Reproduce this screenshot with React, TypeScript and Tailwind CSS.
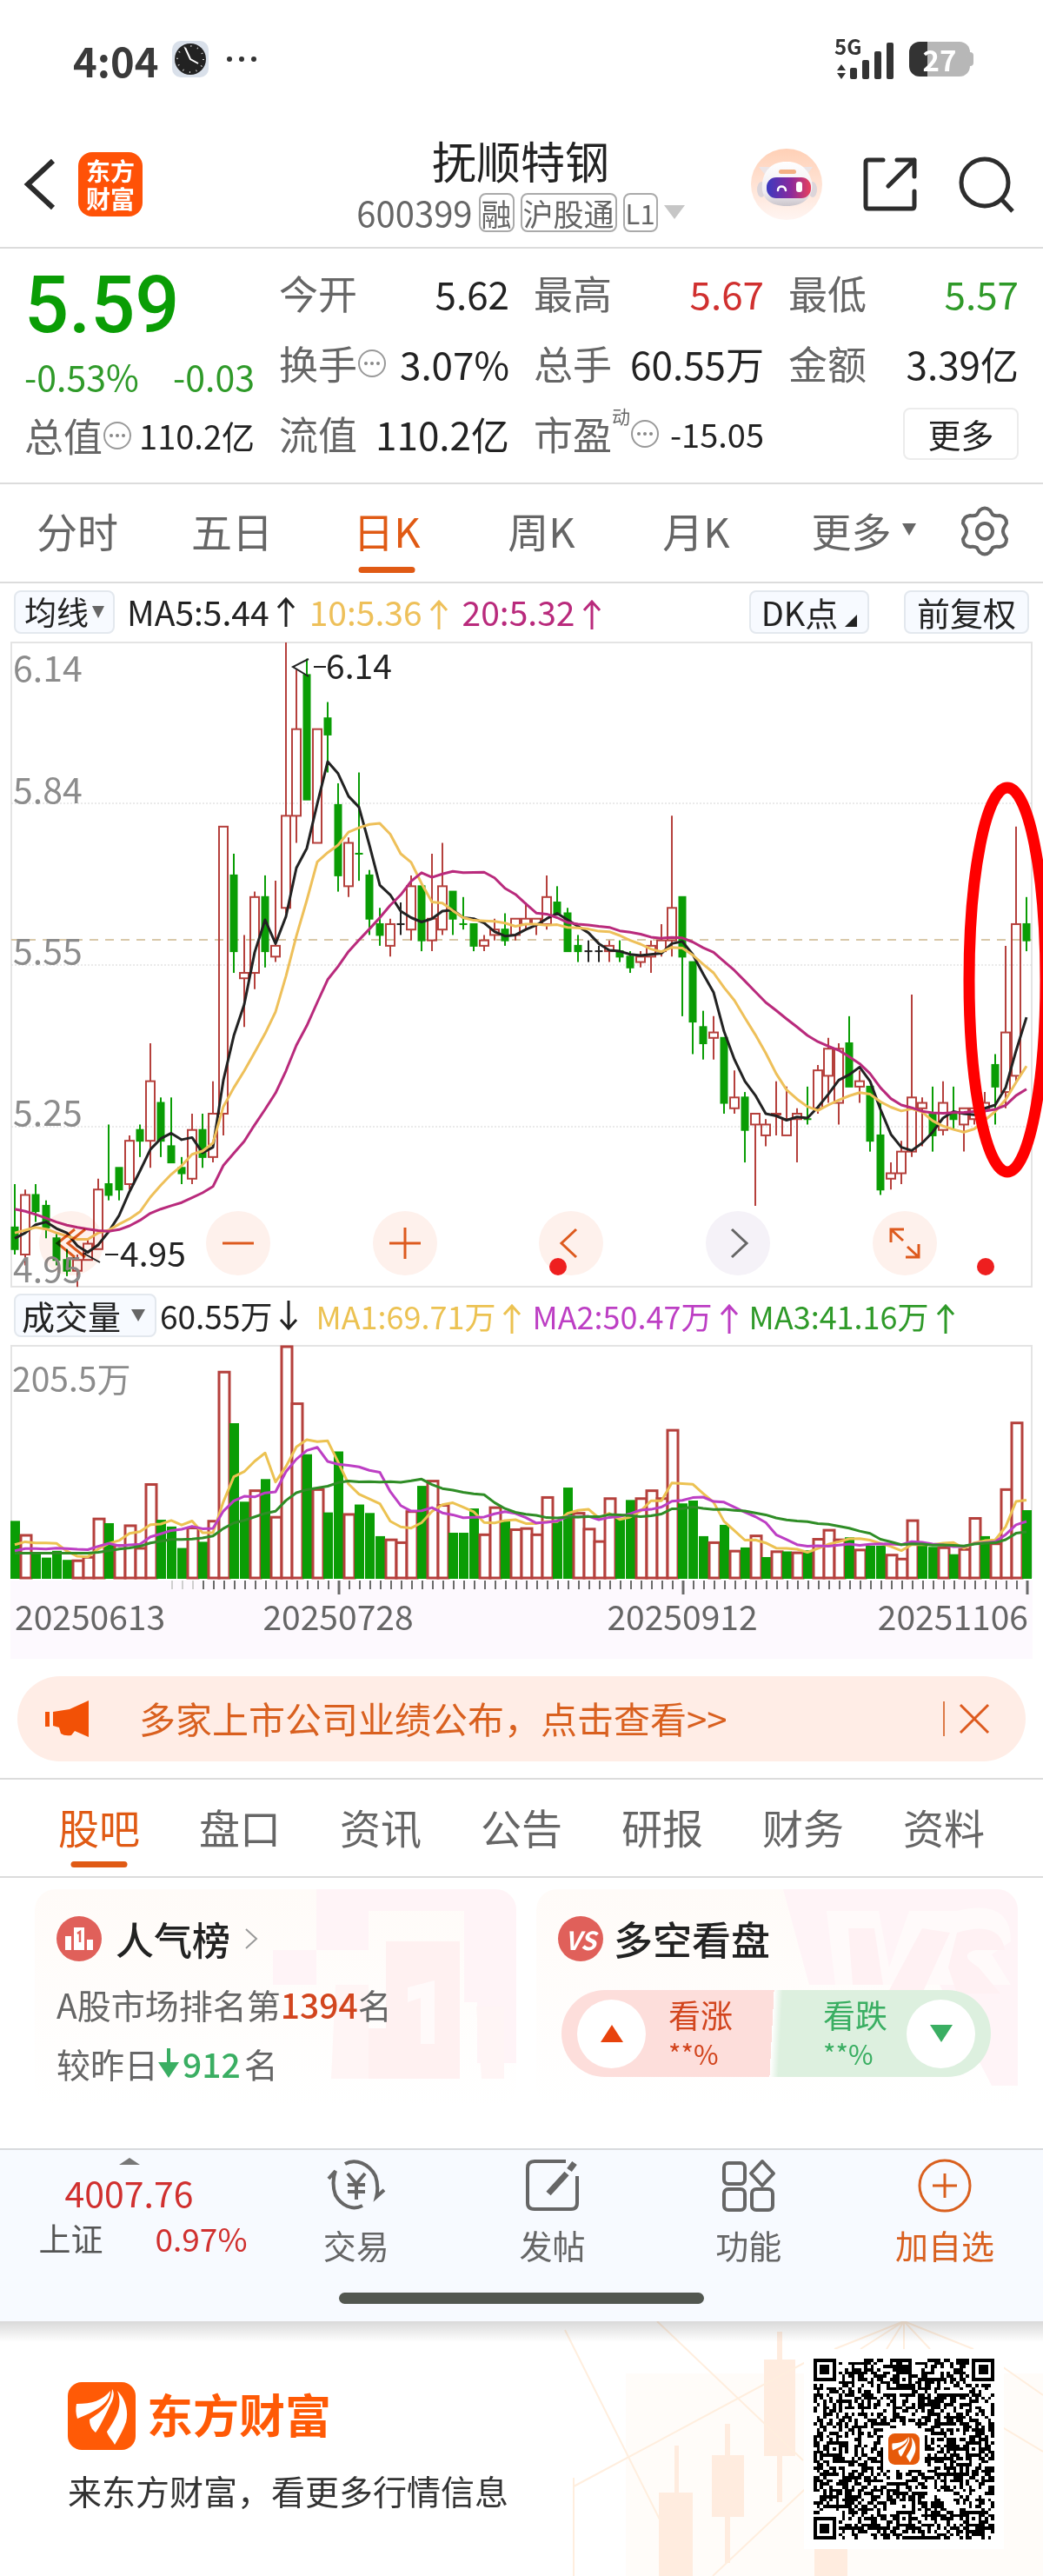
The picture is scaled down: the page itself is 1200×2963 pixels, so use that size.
import React, { useState } from "react";

const CJK = '"Noto Sans CJK SC", "Noto Sans", sans-serif';

const RED = "#b5403c";
const GREEN = "#0a9d05";

/* Daily candles in cents: [high, body top, body bottom, low, r(ise) | g(fall) | b(flat)] */
type Candle = [number, number, number, number, "r" | "g" | "b"];
const CANDLES: Candle[] = [
  [514, 506, 502, 501, "g"], [513, 512, 501, 499, "r"], [514, 512, 509, 507, "g"], [511, 510, 506, 504, "g"],
  [505, 504, 500, 499, "g"], [502, 500, 498, 497, "g"], [501, 500, 498, 495, "r"], [504, 503, 500, 500, "r"],
  [515, 513, 502, 502, "r"], [525, 514, 512, 511, "g"], [517, 517, 513, 511, "g"], [523, 522, 514, 513, "r"],
  [525, 524, 522, 519, "g"], [540, 533, 522, 517, "r"], [530, 529, 522, 519, "g"], [530, 521, 518, 518, "g"],
  [519, 517, 516, 514, "g"], [527, 524, 515, 514, "r"], [527, 524, 519, 517, "g"], [533, 527, 519, 518, "r"],
  [580, 580, 527, 523, "r"], [575, 571, 557, 553, "g"], [560, 553, 552, 543, "r"], [568, 567, 553, 550, "r"],
  [571, 567, 557, 554, "g"], [570, 558, 556, 555, "r"], [614, 582, 565, 564, "r"], [609, 598, 582, 577, "r"],
  [611, 608, 585, 585, "g"], [598, 598, 577, 577, "r"], [603, 600, 597, 590, "g"], [588, 584, 571, 568, "g"],
  [578, 577, 569, 567, "r"], [590, 575, 575, 570, "g"], [572, 571, 563, 560, "g"], [565, 562, 560, 558, "g"],
  [563, 562, 558, 556, "r"], [566, 562, 562, 560, "b"], [571, 569, 561, 559, "r"], [569, 569, 559, 557, "g"],
  [575, 563, 559, 557, "r"], [577, 569, 561, 560, "r"], [568, 568, 563, 560, "g"], [567, 562, 562, 561, "g"],
  [562, 562, 558, 557, "g"], [560, 559, 558, 557, "r"], [563, 561, 560, 559, "r"], [564, 561, 559, 558, "g"],
  [563, 563, 560, 559, "r"], [566, 563, 562, 561, "r"], [563, 563, 562, 560, "r"], [571, 567, 562, 561, "r"],
  [569, 566, 564, 564, "g"], [565, 564, 557, 557, "g"], [560, 558, 557, 555, "g"], [559, 557, 557, 555, "b"],
  [558, 557, 557, 555, "b"], [559, 558, 557, 555, "r"], [559, 557, 556, 555, "g"], [557, 556, 554, 553, "g"],
  [557, 556, 555, 554, "r"], [559, 558, 556, 553, "r"], [562, 559, 557, 556, "r"], [582, 565, 559, 556, "r"],
  [567, 567, 556, 545, "g"], [555, 555, 544, 538, "g"], [546, 543, 540, 537, "g"], [545, 542, 541, 537, "r"],
  [541, 541, 529, 527, "g"], [535, 530, 528, 527, "r"], [531, 530, 524, 518, "g"], [527, 527, 525, 510, "r"],
  [526, 525, 523, 521, "r"], [533, 527, 527, 523, "r"], [532, 526, 523, 523, "r"], [528, 527, 526, 518, "r"],
  [532, 526, 526, 525, "g"], [536, 535, 528, 527, "r"], [541, 539, 534, 529, "r"], [540, 539, 529, 525, "r"],
  [545, 540, 532, 532, "g"], [535, 533, 532, 529, "r"], [532, 532, 522, 520, "g"], [529, 523, 513, 512, "g"],
  [518, 516, 515, 513, "r"], [522, 520, 516, 514, "r"], [549, 530, 520, 519, "r"], [530, 529, 528, 521, "r"],
  [532, 527, 523, 520, "g"], [533, 529, 524, 523, "r"], [532, 527, 526, 524, "g"], [528, 528, 525, 520, "r"],
  [529, 528, 526, 525, "r"], [531, 529, 528, 526, "r"], [538, 536, 532, 525, "g"], [558, 542, 531, 528, "r"],
  [580, 562, 534, 533, "r"], [567, 562, 559, 557, "g"],
];

/* Daily volume in 万; a negative value is a falling day */
const VOLUME = [
  -50.5, 38.5, -22, -18, -24, -16, 16, 19, 53, -48.5, 29.5, 47, 27, 83.5, -51.5, -45.5, -26.5, 45, -32, 51,
  183, -137, -67.5, 78, -87.5, 54.5, 205.5, 155, -109.5, 79, -58, -112, 57, -65, -57.5, -37, 34.5, 32, 59.5,
  -81.5, 86.5, 65, -40, -40, -61.5, 39, 63, -51, 43.5, 44.5, 39, 72, -50.5, -80, 58, 44, 33, 71, -52.5, -69,
  71, 78, 71, 131.5, -66, -68.5, -37, 32, -47, 24.5, -27, 38, -18.5, 24, -23.5, 23, -24.5, 35, 43, 34.5, -36,
  25.5, -28.5, -28.5, 21, 17.5, 51.5, -29.5, -27.5, 27.5, -21, 26, 53.5, -37, 31, 79, 138, -60,
];

const STEP = 12;
const xAt = (i: number) => 5 + STEP * i;
const priceY = (p: number) => 1 + (614 - p) * 6.23;
const volY = (v: number) => 268 - (v / 205.5) * 267;

function average(values: number[], span: number, lead: number[]) {
  return values.map((_, i) => {
    if (i < lead.length) return lead[i];
    const part = values.slice(i - span + 1, i + 1);
    return part.reduce((a, b) => a + b, 0) / span;
  });
}

const line = (values: number[], y: (v: number) => number) =>
  values.map((v, i) => `${xAt(i)},${y(v).toFixed(1)}`).join(" ");

const CLOSES = CANDLES.map(([, top, bottom, , kind]) => (kind === "g" ? bottom : top));
const MA5 = average(CLOSES, 5, [504, 505, 506.5, 507]);
const MA10 = average(CLOSES, 10, [505, 505.5, 506, 505.7, 505, 504.4, 503.8, 503.8, 505]);
const MA20 = average(CLOSES, 20, [
  509.4, 509, 508.4, 507.7, 507, 506.4, 506, 505.7, 505.4, 505.3, 505.6, 506.3, 507.3, 508.6, 509.4, 510, 510.6,
  511.5, 512.4,
]);
const VOL = VOLUME.map(Math.abs);
const VMA5 = average(VOL, 5, [29.5, 32, 31, 31]);
const VMA10 = average(VOL, 10, [24, 26, 26, 25.6, 26.4, 26, 25.4, 25, 28]);
const VMA20 = average(VOL, 20, [
  22, 22, 22, 22, 22, 22, 22, 22, 22.6, 24, 25.6, 26.5, 28, 31, 32.5, 34, 34, 34.5, 35.4,
]);

function PriceChart() {
  return (
    <svg viewBox="0 0 1176 743" className="block w-full overflow-visible" role="img" aria-label="日K线图">
      <rect x="1" y="1" width="1174" height="741" fill="none" stroke="#e4e4e4" strokeWidth="2" />
      {[186, 372, 558].map((y) => (
        <line key={y} x1="1" x2="1175" y1={y} y2={y} stroke="#d5d5d5" strokeWidth="1" strokeDasharray="2 2" />
      ))}
      <line x1="1" x2="1175" y1="343" y2="343" stroke="#d9c9aa" strokeWidth="2" strokeDasharray="10 8" />
      {CANDLES.map(([high, top, bottom, low, kind], i) => {
        const x = xAt(i);
        if (kind === "r") {
          return (
            <g key={i} stroke={RED} strokeWidth="2" fill="none">
              <path d={`M${x} ${priceY(high)}V${priceY(top)}M${x} ${priceY(bottom)}V${priceY(low)}`} />
              <rect x={x - 5} y={priceY(top)} width="10" height={Math.max(priceY(bottom) - priceY(top), 1)} />
            </g>
          );
        }
        const color = kind === "g" ? GREEN : "#222";
        return (
          <g key={i} fill={color}>
            <rect x={x - 1} y={priceY(high)} width="2" height={priceY(low) - priceY(high)} />
            <rect x={x - 4.5} y={priceY(top) - 1} width="9" height={priceY(bottom) - priceY(top) + 2} />
          </g>
        );
      })}
      <g fontSize="41" fill="#8c8c8c">
        <text x="3" y="46">6.14</text>
        <text x="3" y="186">5.84</text>
        <text x="3" y="371">5.55</text>
        <text x="3" y="557">5.25</text>
        <text x="3" y="737">4.95</text>
      </g>
      <g fill="none" strokeWidth="3" strokeLinejoin="round">
        <polyline points={line(MA5, priceY)} stroke="#222" />
        <polyline points={line(MA10, priceY)} stroke="#eec05a" />
        <polyline points={line(MA20, priceY)} stroke="#b92a7c" />
      </g>
      <g fill="none" stroke="#222" strokeWidth="2">
        <path d="M343 20L325 29L343 40M349 29H363" />
        <path d="M102 694L85 704L103 714M109 705H124" />
      </g>
      <g fontSize="39" fill="#222">
        <text x="363" y="43">6.14</text>
        <text x="126" y="719">4.95</text>
      </g>
    </svg>
  );
}

function VolumeChart() {
  return (
    <svg viewBox="0 0 1176 361" className="block w-full overflow-visible" role="img" aria-label="成交量图">
      <rect x="0" y="271" width="1176" height="90" fill="#fdf9fe" />
      <path d="M1 268V1H1175V268" fill="none" stroke="#e4e4e4" strokeWidth="2" />
      {VOLUME.map((v, i) =>
        v < 0 ? (
          <rect key={i} x={xAt(i) - 5} y={volY(-v)} width="11" height={269 - volY(-v)} fill={GREEN} />
        ) : (
          <rect
            key={i}
            x={xAt(i) - 5}
            y={volY(v) + 1}
            width="12"
            height={267 - volY(v)}
            fill="#fff"
            stroke={RED}
            strokeWidth="3"
          />
        ),
      )}
      <g fill="none" strokeWidth="3" strokeLinejoin="round">
        <polyline points={line(VMA5, volY)} stroke="#ecc252" />
        <polyline points={line(VMA10, volY)} stroke="#bd3fc4" />
        <polyline points={line(VMA20, volY)} stroke="#2f8d26" />
      </g>
      {VOLUME.map((_, i) => {
        if (i < 15) return null;
        const major = i === 31 || i === 64 || i === 97;
        return (
          <line
            key={i}
            x1={xAt(i) + 1}
            x2={xAt(i) + 1}
            y1="271"
            y2={major ? 287 : 281}
            stroke={i < 18 ? "#cfcfcf" : "#6a6a6a"}
            strokeWidth={major ? 3 : 2}
          />
        );
      })}
      <text x="2" y="54" fontSize="39" fill="#8c8c8c">205.5万</text>
      <g fontSize="39" fill="#666">
        <text x="5" y="328">20250613</text>
        <text x="377" y="328" textAnchor="middle">20250728</text>
        <text x="773" y="328" textAnchor="middle">20250912</text>
        <text x="1171" y="328" textAnchor="end">20251106</text>
      </g>
    </svg>
  );
}

function Info() {
  return (
    <svg viewBox="0 0 34 34" className="size-[34px] shrink-0">
      <circle cx="17" cy="17" r="15" fill="none" stroke="#999" strokeWidth="2" />
      <circle cx="10" cy="17" r="2" fill="#888" />
      <circle cx="17" cy="17" r="2" fill="#888" />
      <circle cx="24" cy="17" r="2" fill="#888" />
    </svg>
  );
}

function Cell({ label, value, tone = "text-[#222]", size = "text-[44px]", info = false, sup = "" }: {
  label: string; value: string; tone?: string; size?: string; info?: boolean; sup?: string;
}) {
  return (
    <div className="flex h-[81px] items-center justify-between whitespace-nowrap">
      <dt className="flex items-center text-[45px] text-[#666]">
        {label}
        {sup && <sup className="self-start text-[21px] leading-[24px]">{sup}</sup>}
        {info && <Info />}
      </dt>
      <dd className={`${size} ${tone}`}>{value}</dd>
    </div>
  );
}

function Robot() {
  return (
    <svg viewBox="0 0 82 82" className="size-[82px]">
      <defs>
        <linearGradient id="halo" x1="0" y1="0" x2="0" y2="1">
          <stop offset="0" stopColor="#ffd0b6" />
          <stop offset="1" stopColor="#fff5f2" />
        </linearGradient>
        <linearGradient id="visor" x1="0" y1="0" x2="1" y2="0">
          <stop offset="0" stopColor="#3a3ac0" />
          <stop offset="0.550" stopColor="#8b2a9c" />
          <stop offset="1" stopColor="#e8405c" />
        </linearGradient>
        <linearGradient id="shell" x1="0" y1="0" x2="0" y2="1">
          <stop offset="0" stopColor="#fff" />
          <stop offset="0.700" stopColor="#f0ecf0" />
          <stop offset="1" stopColor="#c9c4ca" />
        </linearGradient>
      </defs>
      <circle cx="41" cy="41" r="41" fill="url(#halo)" />
      <path d="M9 21L22 21L18 32ZM71 21L59 21L63 32Z" fill="#ece4e6" />
      <ellipse cx="12" cy="47" rx="5" ry="9" fill="#dcd5da" />
      <ellipse cx="71" cy="47" rx="5" ry="9" fill="#dcd5da" />
      <path d="M40 15C56 14 67 24 70 38C73 56 60 66 41 66C22 66 11 57 13 40C15 24 25 15 40 15Z" fill="url(#shell)" />
      <rect x="32" y="24" width="20" height="5" rx="2.500" fill="#f3b184" />
      <rect x="18" y="33" width="51" height="24" rx="11" fill="url(#visor)" />
      <path d="M31 48C31 42 39 42 40 48" stroke="#fff" strokeWidth="2.500" fill="none" strokeLinecap="round" />
      <rect x="52" y="38" width="7" height="12" rx="3" fill="#fff" />
    </svg>
  );
}

function Swoosh({ className, color }: { className: string; color: string }) {
  return (
    <svg viewBox="0 0 78 78" className={className}>
      <rect width="78" height="78" rx="16" fill={color} />
      <path d="M10 25C28 25 40 21 49 10C48 26 30 34 11 42C9 36 9 30 10 25Z" fill="#fff" />
      <path d="M51 8C54 12 53 19 49 26C44 36 38 50 32 58C27 54 25 49 25 43C38 34 50 27 51 8Z" fill="#fff" />
      <path d="M57 10C67 20 70 34 67 46C63 57 58 65 54 72C51 66 46 62 45 57C55 42 64 28 57 10Z" fill="#fff" />
    </svg>
  );
}

const QR_SIZE = 57;
function qrPath() {
  let seed = 20251106;
  const rand = () => {
    seed = (seed * 1103515245 + 12345) % 2147483648;
    return seed / 2147483648;
  };
  const finder = (x: number, y: number, fx: number, fy: number) => {
    const dx = x - fx;
    const dy = y - fy;
    if (dx < -1 || dx > 7 || dy < -1 || dy > 7) return null;
    if (dx < 0 || dx > 6 || dy < 0 || dy > 6) return false;
    if (dx === 0 || dx === 6 || dy === 0 || dy === 6) return true;
    return dx > 1 && dx < 5 && dy > 1 && dy < 5;
  };
  const marks = [[28, 6], [6, 28], [50, 28], [28, 50], [50, 50]];
  let d = "";
  for (let y = 0; y < QR_SIZE; y++) {
    for (let x = 0; x < QR_SIZE; x++) {
      let on = rand() > 0.5;
      const f = finder(x, y, 0, 0) ?? finder(x, y, QR_SIZE - 7, 0) ?? finder(x, y, 0, QR_SIZE - 7);
      if (f !== null) on = f;
      else {
        for (const [mx, my] of marks) {
          const r = Math.max(Math.abs(x - mx), Math.abs(y - my));
          if (r <= 2) on = r !== 1;
        }
        if (Math.abs(x - 28) < 6.5 && Math.abs(y - 28) < 6.5) on = false;
      }
      if (on) d += `M${x} ${y}h1v1h-1z`;
    }
  }
  return d;
}
const QR = qrPath();

const roundBtn =
  "flex size-[74px] items-center justify-center rounded-full bg-[#fef1ec] mix-blend-multiply";

const chip = "rounded-lg border-2 border-[#e3e8ee] bg-[#f7faff] text-[#222]";

export default function App() {
  const [period, setPeriod] = useState("日K");
  const [section, setSection] = useState("股吧");

  return (
    <div className="w-full overflow-hidden bg-white leading-none text-[#222]" style={{ fontFamily: CJK }}>
      {/* Status bar */}
      <div className="flex h-[140px] items-center justify-between pr-20 pb-1 pl-[84px]">
        <div className="flex items-center gap-4 text-[47px] font-bold text-[#3a3a3a]">
          <span>4:04</span>
          <svg viewBox="0 0 42 42" className="size-[42px]">
            <rect width="42" height="42" rx="10" fill="#d9e0ea" />
            <circle cx="21" cy="21" r="18" fill="#222" />
            <circle cx="21" cy="21" r="15" fill="none" stroke="#ddd" strokeWidth="2" strokeDasharray="1 6.850" />
            <path d="M15 8L21 21L30 26" stroke="#fff" strokeWidth="2" fill="none" />
          </svg>
          <svg viewBox="0 0 36 8" className="ml-1 w-9">
            <circle cx="4" cy="4" r="3" fill="#333" />
            <circle cx="18" cy="4" r="3" fill="#333" />
            <circle cx="32" cy="4" r="3" fill="#333" />
          </svg>
        </div>
        <div className="flex items-center gap-4">
          <div className="relative">
            <svg viewBox="0 0 70 46" className="h-[46px] w-[70px]">
              <path d="M8 29L13 36H3ZM8 46L13 39H3Z" fill="#333" />
              <g fill="#333">
                <rect x="18" y="33" width="8" height="13" rx="2" />
                <rect x="32" y="24" width="8" height="22" rx="2" />
                <rect x="46" y="14" width="8" height="32" rx="2" />
                <rect x="60" y="4" width="8" height="42" rx="2" />
              </g>
            </svg>
            <span className="absolute -top-1 left-0 text-[24px] leading-[24px] font-bold text-[#333]">5G</span>
          </div>
          <div className="flex items-center">
            <div className="flex h-10 w-[70px] items-center justify-center rounded-xl bg-linear-to-r from-[#333] from-30% to-[#b7b7b7] to-30% text-[33px] font-bold text-white">
              27
            </div>
            <div className="h-4 w-1 rounded-r bg-[#b7b7b7]" />
          </div>
        </div>
      </div>

      {/* Title bar */}
      <header className="grid h-[146px] grid-cols-[1fr_auto_1fr] items-center border-b-2 border-[#dcdcdc] pr-8 pl-[26px]">
        <div className="flex items-center gap-6">
          <button aria-label="返回">
            <svg viewBox="0 0 40 62" className="h-[62px] w-10">
              <path d="M35 4L6 31L35 58" fill="none" stroke="#2b2b2b" strokeWidth="6" />
            </svg>
          </button>
          <a href="#home" className="flex size-[74px] items-center justify-center rounded-2xl bg-[#ff5207] text-center text-[28px] leading-[32px] font-bold text-white">
            东方<br />财富
          </a>
        </div>
        <div className="flex flex-col items-center gap-3 pl-1">
          <h1 className="text-[51px] leading-[52px]">抚顺特钢</h1>
          <button className="flex items-center gap-[7px] text-[35px] text-[#666]">
            <span className="text-[40px]">600399</span>
            <span className="rounded-lg border-2 border-[#aaa] px-px py-[3px]">融</span>
            <span className="rounded-lg border-2 border-[#aaa] px-px py-[3px]">沪股通</span>
            <span className="rounded-lg border-2 border-[#aaa] px-px py-[3px] text-[31px] leading-[35px]">L1</span>
            <svg viewBox="0 0 24 16" className="w-6"><path d="M0 0H24L12 16Z" fill="#c6c6c6" /></svg>
          </button>
        </div>
        <div className="flex items-center justify-end gap-[47px]">
          <button aria-label="智能助手"><Robot /></button>
          <button aria-label="分享">
            <svg viewBox="0 0 62 62" className="size-[62px]" fill="none" stroke="#2d2d2d" strokeWidth="5" strokeLinecap="round" strokeLinejoin="round">
              <path d="M23 3H6Q3 3 3 6V56Q3 59 6 59H56Q59 59 59 56V39M39 3H59V22M59 3L29 33" />
            </svg>
          </button>
          <button aria-label="搜索">
            <svg viewBox="0 0 66 66" className="size-[66px]" fill="none" stroke="#2d2d2d" strokeWidth="5">
              <circle cx="31" cy="31" r="27" />
              <path d="M50 50L63 64" />
            </svg>
          </button>
        </div>
      </header>

      {/* Quote */}
      <section className="grid h-[271px] grid-cols-4 gap-x-7 border-b-2 border-[#dcdcdc] px-7 pt-2.5">
        <dl>
          <dd className="flex h-[108px] items-center pt-1 font-[Roboto] text-[90px] font-medium text-[#0a9d05]">5.59</dd>
          <dd className="flex h-14 items-center justify-between text-[41px] text-[#2f9a29]">
            <span>-0.53%</span>
            <span>-0.03</span>
          </dd>
          <Cell label="总值" value="110.2亿" size="text-[38px]" info />
        </dl>
        <dl>
          <Cell label="今开" value="5.62" />
          <Cell label="换手" value="3.07%" info />
          <Cell label="流值" value="110.2亿" />
        </dl>
        <dl>
          <Cell label="最高" value="5.67" tone="text-[#d0302f]" />
          <Cell label="总手" value="60.55万" />
          <Cell label="市盈" value="-15.05" sup="动" size="text-[38px]" info />
        </dl>
        <div>
          <dl>
            <Cell label="最低" value="5.57" tone="text-[#2f9a29]" />
            <Cell label="金额" value="3.39亿" />
          </dl>
          <div className="flex h-[81px] items-center justify-end">
            <button className="h-[60px] w-[133px] rounded-lg border-2 border-[#ececec] text-[38px]">更多</button>
          </div>
        </div>
      </section>

      {/* Period tabs */}
      <nav className="flex h-[114px] border-b-2 border-[#dcdcdc]">
        {["分时", "五日", "日K", "周K", "月K"].map((t) => (
          <button
            key={t}
            onClick={() => setPeriod(t)}
            className={`relative flex-[178] pb-2 text-[47px] ${period === t ? "text-[#e05a14]" : "text-[#666]"}`}
          >
            {t}
            {period === t && (
              <span className="absolute bottom-2.5 left-1/2 h-[7px] w-[65px] -translate-x-1/2 rounded-full bg-[#e05a14]" />
            )}
          </button>
        ))}
        <button className="flex flex-[207] items-center justify-center gap-3 pb-2 text-[46px] text-[#666]">
          更多
          <svg viewBox="0 0 16 14" className="w-4"><path d="M0 0H16L8 14Z" fill="#666" /></svg>
        </button>
        <button aria-label="设置" className="flex w-[103px] shrink-0 items-center pb-1 pl-2">
          <svg viewBox="0 0 56 58" className="h-[58px] w-14" fill="none" stroke="#666" strokeWidth="4" strokeLinejoin="round">
            <path d="M22 5Q28 0 34 5L37 10Q40 12 45 11Q53 12 53 20L50 25Q48 29 50 33L53 38Q53 46 45 47Q40 46 37 48L34 53Q28 58 22 53L19 48Q16 46 11 47Q3 46 3 38L6 33Q8 29 6 25L3 20Q3 12 11 11Q16 12 19 10Z" />
            <circle cx="28" cy="29" r="9" />
          </svg>
        </button>
      </nav>

      {/* Moving average bar */}
      <div className="flex h-[67px] items-center pr-4 pb-0.5 pl-4 text-[38px] whitespace-nowrap">
        <button className={`flex h-[50px] w-[116px] items-center justify-center gap-1 text-[37px] ${chip}`}>
          均线
          <svg viewBox="0 0 14 14" className="w-3.5"><path d="M0 0H14L7 14Z" fill="#666" /></svg>
        </button>
        <span className="ml-3.5 text-[39px]">MA5:5.44</span>
        <Arrow up />
        <span className="ml-2 text-[39px] text-[#eec05a]">10:5.36</span>
        <span className="text-[#eec05a]"><Arrow up /></span>
        <span className="ml-2 text-[39px] text-[#b92a7c]">20:5.32</span>
        <span className="text-[#b92a7c]"><Arrow up /></span>
        <div className="ml-auto flex gap-10">
          <button className={`flex h-[50px] w-[138px] items-end justify-center gap-2 pb-1 ${chip}`}>
            DK点
            <svg viewBox="0 0 14 14" className="mb-0.5 w-3.5"><path d="M14 0V14H0Z" fill="#222" /></svg>
          </button>
          <button className={`h-[50px] w-[144px] ${chip}`}>前复权</button>
        </div>
      </div>

      {/* Price chart */}
      <div className="relative px-3">
        <PriceChart />
        <div className="absolute right-[122px] bottom-[14px] left-[45px] flex justify-between">
          <button aria-label="最早" className={roundBtn}>
            <svg viewBox="0 0 40 36" className="w-10" fill="none" stroke="#dd5a1e" strokeWidth="3">
              <path d="M24 2L4 18L24 34M36 2L16 18L36 34" />
            </svg>
          </button>
          <button aria-label="缩小" className={roundBtn}>
            <svg viewBox="0 0 36 36" className="w-9" stroke="#dd5a1e" strokeWidth="3"><path d="M0 18H36" /></svg>
          </button>
          <button aria-label="放大" className={roundBtn}>
            <svg viewBox="0 0 36 36" className="w-9" stroke="#dd5a1e" strokeWidth="3"><path d="M0 18H36M18 0V36" /></svg>
          </button>
          <button aria-label="向左" className={roundBtn}>
            <svg viewBox="0 0 36 36" className="w-9" fill="none" stroke="#dd5a1e" strokeWidth="3"><path d="M24 2L7 18L24 34" /></svg>
          </button>
          <button aria-label="向右" className="flex size-[74px] items-center justify-center rounded-full bg-[#f5f2f8] mix-blend-multiply">
            <svg viewBox="0 0 36 36" className="w-9" fill="none" stroke="#666" strokeWidth="3"><path d="M11 2L28 18L11 34" /></svg>
          </button>
          <button aria-label="全屏" className={roundBtn}>
            <svg viewBox="0 0 36 36" className="w-9" fill="none" stroke="#dd5a1e" strokeWidth="3">
              <path d="M2 17V2H17M2 2L16 15M34 19V34H19M34 34L21 22" />
            </svg>
          </button>
        </div>
        <svg viewBox="0 0 1200 743" className="pointer-events-none absolute inset-x-0 top-0 w-full">
          <ellipse cx="1159" cy="389" rx="44" ry="221" fill="none" stroke="#ff0000" strokeWidth="13" />
          <circle cx="642" cy="719" r="10" fill="#ee1f1f" />
          <circle cx="1134" cy="719" r="10" fill="#ee1f1f" />
        </svg>
      </div>

      {/* Volume bar */}
      <div className="flex h-[66px] items-center pb-0.5 pl-4 text-[36px] whitespace-nowrap">
        <button className={`flex h-[50px] w-[164px] items-center justify-center gap-3 pr-1 text-[38px] ${chip}`}>
          成交量
          <svg viewBox="0 0 16 14" className="w-4"><path d="M0 0H16L8 14Z" fill="#666" /></svg>
        </button>
        <span className="ml-1 text-[37px]">60.55万</span>
        <Arrow />
        <span className="ml-3 text-[#ecc252]">MA1:69.71万</span>
        <span className="text-[#ecc252]"><Arrow up /></span>
        <span className="ml-1 text-[#bd3fc4]">MA2:50.47万</span>
        <span className="text-[#bd3fc4]"><Arrow up /></span>
        <span className="ml-1 text-[#2f9a29]">MA3:41.16万</span>
        <span className="text-[#2f9a29]"><Arrow up /></span>
      </div>
      <div className="px-3"><VolumeChart /></div>

      {/* Notice */}
      <div className="mx-5 mt-5 flex h-[98px] items-center rounded-full bg-[#ffede6] pr-[41px] pl-8 text-[42px] text-[#d9601f]">
        <svg viewBox="0 0 50 42" className="w-[50px] shrink-0" fill="#f25106">
          <rect x="0" y="13" width="5" height="17" />
          <path d="M9 13L28 10L50 0V42L34 35L30 40Q22 41 18 38L16 31L9 29Z" />
        </svg>
        <a href="#notice" className="ml-[58px] flex-1 pb-0.5 whitespace-nowrap">多家上市公司业绩公布，点击查看&gt;&gt;</a>
        <span className="mr-4 h-10 w-0.5 bg-[#dd7a48]" />
        <button aria-label="关闭">
          <svg viewBox="0 0 36 36" className="w-9" stroke="#dd5a1e" strokeWidth="3"><path d="M2 2L34 34M34 2L2 34" /></svg>
        </button>
      </div>

      {/* Section tabs */}
      <nav className="mt-[19px] flex h-[115px] border-y-2 border-[#dcdcdc] px-[33px]">
        {["股吧", "盘口", "资讯", "公告", "研报", "财务", "资料"].map((t) => (
          <button
            key={t}
            onClick={() => setSection(t)}
            className={`relative flex-1 pb-1 text-[47px] ${section === t ? "text-[#e05a14]" : "text-[#666]"}`}
          >
            {t}
            {section === t && (
              <span className="absolute bottom-2.5 left-1/2 h-[7px] w-[65px] -translate-x-1/2 rounded-full bg-[#e05a14]" />
            )}
          </button>
        ))}
      </nav>

      {/* Cards */}
      <section className="grid h-[311px] grid-cols-2 gap-[23px] px-[29px] pt-[13px] pl-10">
        <article className="relative h-[250px] overflow-hidden rounded-3xl bg-linear-to-b from-[#fffbf8] to-white px-[25px] pt-[27px]">
          <svg viewBox="0 0 290 226" className="absolute top-0 right-0 h-[226px]">
            <path d="M60 0H290V200H245V130H230V25H120V70H60V110H10V70H60Z" fill="#fff4f7" />
            <path d="M140 60H225V218H115V160H140Z" fill="#fff1f1" />
            <path d="M82 110H120V218H77ZM244 135H276V218H250Z" fill="#fff5f5" />
            <path d="M165 113L196 105V178H180V125L165 130Z" fill="#fffafa" />
          </svg>
          <div className="relative">
            <a href="#rank" className="flex items-center gap-4 text-[44px] leading-[60px] font-medium">
              <svg viewBox="0 0 52 52" className="size-[52px]">
                <circle cx="26" cy="26" r="26" fill="#e0605a" />
                <path d="M10 23H17V39H10ZM20 13H32V39H20ZM35 27H42V39H35Z" fill="#fff" />
                <path d="M24 20L27 18V30" stroke="#e0605a" strokeWidth="2.500" fill="none" />
              </svg>
              <span>人气榜</span>
              <svg viewBox="0 0 16 26" className="w-4" fill="none" stroke="#999" strokeWidth="2"><path d="M2 2L14 13L2 24" /></svg>
            </a>
            <p className="mt-[22px] text-[39px] leading-[46px] whitespace-nowrap text-[#666]">
              A股市场排名第<b className="font-medium text-[#d2451e]">1394</b>名
            </p>
            <p className="mt-[22px] flex items-center text-[39px] leading-[46px] whitespace-nowrap text-[#666]">
              较昨日
              <svg viewBox="0 0 24 34" className="h-[34px] w-6" fill="#3aae62"><path d="M10 0H14V16H24L12 34L0 16H10Z" /></svg>
              <b className="ml-1 font-medium text-[#3aae62]">912</b>
              <span className="ml-1">名</span>
            </p>
          </div>
        </article>

        <article className="relative h-[250px] overflow-hidden rounded-3xl bg-linear-to-b from-[#fffbf8] to-white px-[25px] pt-[27px]">
          <svg viewBox="0 0 270 226" className="absolute top-0 right-0 h-[226px]">
            <path d="M0 0H270V226H240L180 110H30Z" fill="#fff4f7" />
            <path d="M50 25H110L122 90L145 25H200Q262 10 262 60L240 75L262 110H60Z" fill="#fffafa" />
            <path d="M75 45H105L115 110H80ZM160 45L192 50L160 120H120ZM200 50Q250 35 255 70H222Q200 75 225 90L250 120H200L190 90Z" fill="#fff1f3" />
          </svg>
          <div className="relative">
            <h2 className="flex items-center gap-3 text-[45px] leading-[60px] font-medium">
              <span className="flex size-[52px] items-center justify-center rounded-full bg-[#e0605a] text-[29px] font-bold text-white italic">VS</span>
              多空看盘
            </h2>
            <div className="mt-[29px] mr-[6px] ml-1 flex h-[100px] overflow-hidden rounded-full bg-linear-[93deg] from-[#fddedb] from-49% via-white via-49% to-[#ddf0df] to-51% px-[18px]">
              <button className="flex flex-1 items-center gap-[26px]">
                <span className="flex size-[79px] items-center justify-center rounded-full bg-white">
                  <svg viewBox="0 0 26 20" className="w-[26px]"><path d="M13 0L26 20H0Z" fill="#e8420c" /></svg>
                </span>
                <span className="flex flex-col items-start gap-2 text-[37px] text-[#d2451e]">
                  看涨<span className="text-[31px] leading-[35px]">**%</span>
                </span>
              </button>
              <button className="flex flex-1 items-center justify-end gap-[22px]">
                <span className="flex flex-col items-start gap-2 text-[37px] text-[#3aae62]">
                  看跌<span className="text-[31px] leading-[35px]">**%</span>
                </span>
                <span className="flex size-[79px] items-center justify-center rounded-full bg-white">
                  <svg viewBox="0 0 26 20" className="w-[26px]"><path d="M0 0H26L13 20Z" fill="#3aae62" /></svg>
                </span>
              </button>
            </div>
          </div>
        </article>
      </section>

      {/* Bottom bar */}
      <div className="border-t-2 border-[#d8dadd] bg-[#f7faff]">
        <div className="flex h-[150px] text-[38px] text-[#666]">
          <button className="flex w-[297px] shrink-0 flex-col items-center pt-[9px]">
            <svg viewBox="0 0 24 8" className="h-2 w-6"><path d="M0 8L12 0L24 8Z" fill="#777" /></svg>
            <span className="mt-2 text-[41px] leading-[46px] text-[#d0302f]">4007.76</span>
            <span className="mt-2 flex gap-[60px] pl-8 text-[37px] leading-[44px]">
              <span className="text-[#555]">上证</span>
              <span className="text-[#d0302f]">0.97%</span>
            </span>
          </button>
          <div className="flex flex-1">
            <BarItem label="交易">
              <path d="M22 6C34 -1 50 6 57 20Q61 32 58 44L67 36M42 54C30 60 18 54 11 42Q6 28 11 14L3 23" />
              <path d="M25 17L35 29L45 17M35 29V47M25 30H45M25 38H45" />
            </BarItem>
            <BarItem label="发帖">
              <path d="M50 3H14Q6 3 6 11V51Q6 58 14 58H56Q63 58 63 51V20" />
              <path d="M60 5L54 13M51 17L30 40" strokeWidth="7" />
            </BarItem>
            <BarItem label="功能">
              <rect x="7" y="5" width="24" height="24" rx="5" />
              <rect x="7" y="35" width="24" height="24" rx="5" />
              <rect x="39" y="35" width="24" height="24" rx="5" />
              <path d="M51 3L64 17L51 31L38 17Z" strokeLinejoin="round" />
            </BarItem>
            <BarItem label="加自选" tone="text-[#d9601f]">
              <circle cx="35" cy="31" r="29" strokeWidth="3" />
              <path d="M35 17V45M21 31H49" strokeWidth="3" />
            </BarItem>
          </div>
        </div>
        <div className="mx-auto mt-[14px] h-[13px] w-[35%] rounded-full bg-[#525750]" />
        <div className="h-5" />
      </div>

      {/* Footer */}
      <footer className="relative flex h-[293px] items-center justify-between overflow-hidden pr-[45px] pl-[78px]">
        <svg viewBox="0 0 560 293" className="absolute top-0 right-0 h-full">
          <rect x="80" y="60" width="480" height="233" fill="#fffaf3" opacity="0.500" />
          <g fill="#ffecdf">
            <path d="M118 197H157V293H118ZM179 154H216V225H179ZM239 44H275V155H239ZM297 258H335V293H297Z" />
            <path d="M136 143H141V197H136ZM194 118H200V278H194ZM254 12H260V208H254Z" />
          </g>
          <g stroke="#ffeede" strokeWidth="2" fill="none">
            <path d="M116 0L284 160M10 10L120 230M20 190L300 40M20 300V180M180 293L300 180M400 0L320 32M400 0L350 32M400 0L380 32M400 0L400 32M400 0L430 32M400 0L480 32M510 50L560 85M510 120L560 150" />
          </g>
        </svg>
        <div className="absolute inset-x-0 top-0 h-6 bg-linear-to-b from-black/15 to-transparent" />
        <div className="relative pb-2">
          <div className="flex items-center gap-[13px]">
            <Swoosh className="size-[78px]" color="#ff5a06" />
            <span className="pb-1 text-[53px] font-bold text-[#ff5a06]">东方财富</span>
          </div>
          <p className="mt-6 text-[39px] leading-[44px] whitespace-nowrap text-[#333]">来东方财富，看更多行情信息</p>
        </div>
        <div className="relative flex items-center justify-center">
          <svg viewBox="-3 -3 63 63" className="size-[230px] bg-white" shapeRendering="crispEdges" role="img" aria-label="二维码">
            <path d={QR} fill="#000" />
          </svg>
          <Swoosh className="absolute size-9" color="#e65a0a" />
        </div>
      </footer>
    </div>
  );
}

function Arrow({ up = false }: { up?: boolean }) {
  return (
    <svg viewBox="0 0 22 34" className="mx-2 inline-block h-[34px] w-[22px]" fill="none" stroke="currentColor" strokeWidth="3">
      <path d={up ? "M11 34V3M2 12L11 2L20 12" : "M11 0V31M2 22L11 32L20 22"} />
    </svg>
  );
}

function BarItem({ label, tone = "", children }: { label: string; tone?: string; children: React.ReactNode }) {
  return (
    <button className={`flex flex-1 flex-col items-center pt-[10px] ${tone}`}>
      <svg viewBox="0 0 70 62" className="h-[62px] w-[70px]" fill="none" stroke="currentColor" strokeWidth="4">
        {children}
      </svg>
      <span className="mt-4 leading-[42px]">{label}</span>
    </button>
  );
}
